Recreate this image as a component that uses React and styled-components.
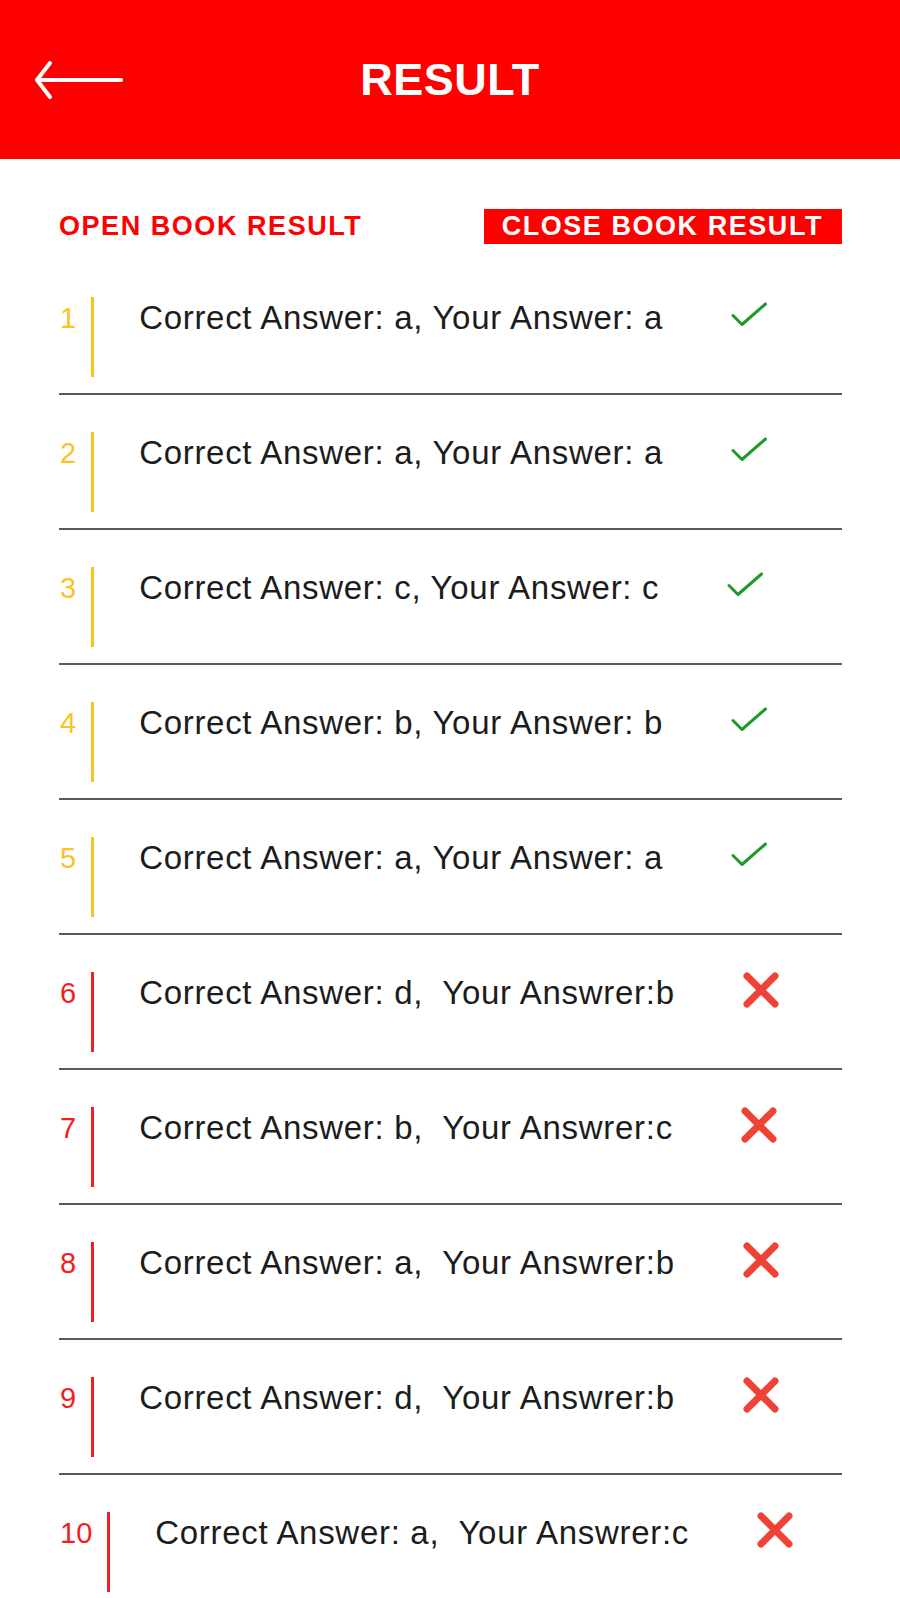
import styled, { createGlobalStyle } from 'styled-components';

const RED = '#ff0000';
const AMBER = '#f7c325';
const WRONG = '#f41c1c';

const results = [
  { correct: 'a', given: 'a' },
  { correct: 'a', given: 'a' },
  { correct: 'c', given: 'c' },
  { correct: 'b', given: 'b' },
  { correct: 'a', given: 'a' },
  { correct: 'd', given: 'b' },
  { correct: 'b', given: 'c' },
  { correct: 'a', given: 'b' },
  { correct: 'd', given: 'b' },
  { correct: 'a', given: 'c' },
];

function BackArrow() {
  return (
    <svg width="92" height="42" viewBox="0 0 92 42" fill="none">
      <path
        d="M4 21 H88 M4 21 L17 4 M4 21 L17 38"
        stroke="#fff"
        strokeWidth="4"
        strokeLinecap="round"
        strokeLinejoin="round"
      />
    </svg>
  );
}

function CheckMark() {
  return (
    <svg width="36" height="36" viewBox="0 0 36 36" fill="none">
      <path
        d="M2 18.5 L11 27.5 L34.5 7"
        stroke="#1f9a2a"
        strokeWidth="3"
        strokeLinecap="round"
        strokeLinejoin="round"
      />
    </svg>
  );
}

function CrossMark() {
  return (
    <svg width="36" height="36" viewBox="0 0 36 36" fill="none">
      <path
        d="M4 4 L32 32 M32 4 L4 32"
        stroke="#ee4236"
        strokeWidth="7"
        strokeLinecap="round"
      />
    </svg>
  );
}

export default function App() {
  return (
    <>
      <GlobalStyle />
      <Header>
        <BackButton aria-label="Back">
          <BackArrow />
        </BackButton>
        <Title>RESULT</Title>
        <span />
      </Header>

      <Content>
        <Tabs>
          <Tab>OPEN BOOK RESULT</Tab>
          <Tab active>CLOSE BOOK RESULT</Tab>
        </Tabs>

        <List>
          {results.map((r, i) => {
            const ok = r.correct === r.given;
            const text = ok
              ? `Correct Answer: ${r.correct}, Your Answer: ${r.given}`
              : `Correct Answer: ${r.correct},  Your Answrer:${r.given}`;
            return (
              <Row key={i}>
                <Num ok={ok}>{i + 1}</Num>
                <Bar ok={ok} />
                <AnswerText>{text}</AnswerText>
                <Mark>{ok ? <CheckMark /> : <CrossMark />}</Mark>
              </Row>
            );
          })}
        </List>
      </Content>
    </>
  );
}

const GlobalStyle = createGlobalStyle`
  body {
    margin: 0;
    background: #fff;
    font-family: "Liberation Sans", Arial, sans-serif;
  }
`;

const Header = styled.header`
  display: grid;
  grid-template-columns: 1fr auto 1fr;
  align-items: center;
  height: 159px;
  background: ${RED};
`;

const BackButton = styled.button`
  display: flex;
  justify-self: start;
  margin-left: 33px;
  padding: 0;
  border: none;
  background: none;
  cursor: pointer;
`;

const Title = styled.h1`
  margin: 0;
  color: #fff;
  font-size: 45px;
  font-weight: 700;
  letter-spacing: 0.5px;
`;

const Content = styled.main`
  padding: 50px 58px 0 59px;
`;

const Tabs = styled.div`
  display: flex;
  align-items: center;
  justify-content: space-between;
  margin-bottom: 16px;
`;

const Tab = styled.button`
  height: 35px;
  padding: ${(p) => (p.active ? '0 19px 0 18px' : '0')};
  border: none;
  background: ${(p) => (p.active ? RED : 'transparent')};
  color: ${(p) => (p.active ? '#fff' : RED)};
  font-family: inherit;
  font-size: 27px;
  font-weight: 700;
  letter-spacing: 1.55px;
  line-height: 35px;
  cursor: pointer;
`;

const List = styled.ul`
  margin: 0;
  padding: 0;
  list-style: none;
`;

const Row = styled.li`
  display: flex;
  align-items: flex-start;
  padding: 37px 0 16px;
  border-bottom: 2px solid #5a5a5a;
`;

const Num = styled.span`
  margin-left: 1px;
  color: ${(p) => (p.ok ? AMBER : WRONG)};
  font-size: 29px;
  line-height: 42px;
`;

const Bar = styled.span`
  width: 3px;
  height: 80px;
  margin-left: 15px;
  background: ${(p) => (p.ok ? AMBER : WRONG)};
`;

const AnswerText = styled.span`
  margin-left: 45px;
  color: #1c1c1c;
  font-size: 33px;
  letter-spacing: 0.7px;
  line-height: 42px;
  white-space: pre;
`;

const Mark = styled.span`
  display: flex;
  margin-left: 68px;
`;
